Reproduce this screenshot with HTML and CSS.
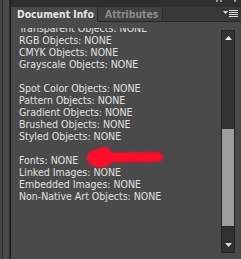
FILE: index.html
```html
<!DOCTYPE html>
<html>
<head>
<meta charset="utf-8">
<link rel="stylesheet" href="styles.css">
</head>
<body>
<div class="app">
  <div class="gutter"></div>
  <div class="panel">
    <div class="topstrip">
      <span class="tick"></span><span class="tick"></span><span class="tick gap"></span>
    </div>
    <div class="tabbar">
      <div class="tab active">Document Info</div>
      <div class="tab second">Attributes</div>
      <div class="tabfill">
        <svg class="menu" width="15" height="8" viewBox="0 0 15 8">
          <polygon points="0,1 5,1 2.5,4" fill="#dcdcdc"/>
          <rect x="6" y="0" width="9" height="1" fill="#dcdcdc"/>
          <rect x="6" y="2" width="9" height="1" fill="#dcdcdc"/>
          <rect x="6" y="4" width="9" height="1" fill="#dcdcdc"/>
          <rect x="6" y="6" width="9" height="1" fill="#dcdcdc"/>
        </svg>
      </div>
    </div>
    <div class="content">
      <div class="viewport">
        <ul class="list">
          <li>Transparent Objects: NONE</li>
          <li>RGB Objects: NONE</li>
          <li>CMYK Objects: NONE</li>
          <li>Grayscale Objects: NONE</li>
          <li class="blank"></li>
          <li>Spot Color Objects: NONE</li>
          <li>Pattern Objects: NONE</li>
          <li>Gradient Objects: NONE</li>
          <li>Brushed Objects: NONE</li>
          <li>Styled Objects: NONE</li>
          <li class="blank"></li>
          <li>Fonts: NONE</li>
          <li>Linked Images: NONE</li>
          <li>Embedded Images: NONE</li>
          <li>Non-Native Art Objects: NONE</li>
        </ul>
      </div>
      <div class="scrollbar">
        <div class="track">
          <svg class="arrow" width="7" height="4" viewBox="0 0 7 4"><polygon points="3.5,0 7,4 0,4" fill="#f0f0f0"/></svg>
        </div>
        <div class="thumb"></div>
        <div class="downbtn">
          <svg class="arrow" width="7" height="4" viewBox="0 0 7 4"><polygon points="0,0 7,0 3.5,4" fill="#d8d8d8"/></svg>
        </div>
      </div>
    </div>
  </div>
  <svg class="redmark" width="90" height="34" viewBox="0 0 90 34">
    <defs>
      <filter id="blur" x="-20%" y="-50%" width="140%" height="200%">
        <feGaussianBlur stdDeviation="1.4"/>
      </filter>
    </defs>
    <g fill="#ff0a2a" stroke="#ff0a2a" filter="url(#blur)">
      <line x1="32" y1="17.5" x2="79" y2="17" stroke-width="10" stroke-linecap="round"/>
      <ellipse cx="21" cy="18" rx="13" ry="9.5" stroke="none"/>
      <ellipse cx="25" cy="12" rx="7" ry="5" stroke="none"/>
    </g>
  </svg>
</div>
</body>
</html>
```
FILE: styles.css
```css
html, body {
  margin: 0;
  padding: 0;
}
body {
  background: #3a3a3a;
  width: 241px;
  height: 259px;
  overflow: hidden;
}
.app {
  position: relative;
  display: flex;
  width: 241px;
  height: 259px;
}
.gutter {
  width: 11px;
  flex: none;
  background: linear-gradient(to right,
    #444 0, #444 2px,
    #2c2c2c 2px, #2c2c2c 3px,
    #4a4a4a 3px, #4a4a4a 9px,
    #2f2f2f 9px, #2f2f2f 10px,
    #1c1c1c 10px, #1c1c1c 11px);
}
.panel {
  flex: 1;
  display: flex;
  flex-direction: column;
  min-width: 0;
}
.topstrip {
  height: 7px;
  flex: none;
  background: #2f2f2f;
  display: flex;
  justify-content: flex-end;
  align-items: flex-start;
  padding-right: 5px;
  gap: 2px;
}
.tick {
  width: 2px;
  height: 2px;
  background: #9a9a9a;
}
.tick.gap {
  margin-left: 10px;
}
.tabbar {
  height: 15px;
  flex: none;
  display: flex;
  background: #383838;
  font-family: "DejaVu Sans Condensed", "DejaVu Sans", sans-serif;
  font-weight: bold;
  font-size: 10.3px;
}
.tab {
  display: flex;
  align-items: center;
  box-sizing: border-box;
  white-space: nowrap;
  overflow: hidden;
  background: #404040;
  color: #8c8c8c;
  border-right: 1px solid #2a2a2a;
  border-bottom: 1px solid #262626;
}
.tab.active {
  width: 87px;
  padding-left: 6px;
  background: #4a4a4a;
  color: #e6e6e6;
  border-bottom-color: #4a4a4a;
}
.tab.second {
  width: 65px;
  padding-left: 7px;
}
.tabfill {
  flex: 1;
  display: flex;
  align-items: center;
  justify-content: flex-end;
  padding-right: 3px;
  background: #383838;
  border-bottom: 1px solid #262626;
}
.menu {
  display: block;
  margin-top: -1px;
}
.content {
  flex: 1;
  display: flex;
  background: #4a4a4a;
  min-height: 0;
  padding-top: 6px;
}
.viewport {
  flex: 1;
  overflow: hidden;
  min-width: 0;
}
.list {
  list-style: none;
  margin: -6px 0 0 0;
  padding: 0 0 0 8px;
  font-family: "DejaVu Sans Condensed", "DejaVu Sans", sans-serif;
  font-size: 10.5px;
  line-height: 12px;
  color: #e2e2e2;
  white-space: nowrap;
}
.list li {
  height: 12px;
}
.scrollbar {
  width: 12px;
  flex: none;
  margin: 2px 6px 6px 0;
  display: flex;
  flex-direction: column;
  border: 1px solid #222;
  background: #333;
}
.track {
  height: 98px;
  flex: none;
  display: flex;
  justify-content: center;
  padding-top: 5px;
  box-sizing: border-box;
}
.arrow {
  display: block;
}
.thumb {
  height: 97px;
  flex: none;
  background: #9e9e9e;
}
.downbtn {
  flex: 1;
  display: flex;
  justify-content: center;
  align-items: flex-end;
  padding-bottom: 5px;
  background: #303030;
  border-top: 1px solid #262626;
}
.redmark {
  position: absolute;
  left: 79px;
  top: 140px;
}
```
